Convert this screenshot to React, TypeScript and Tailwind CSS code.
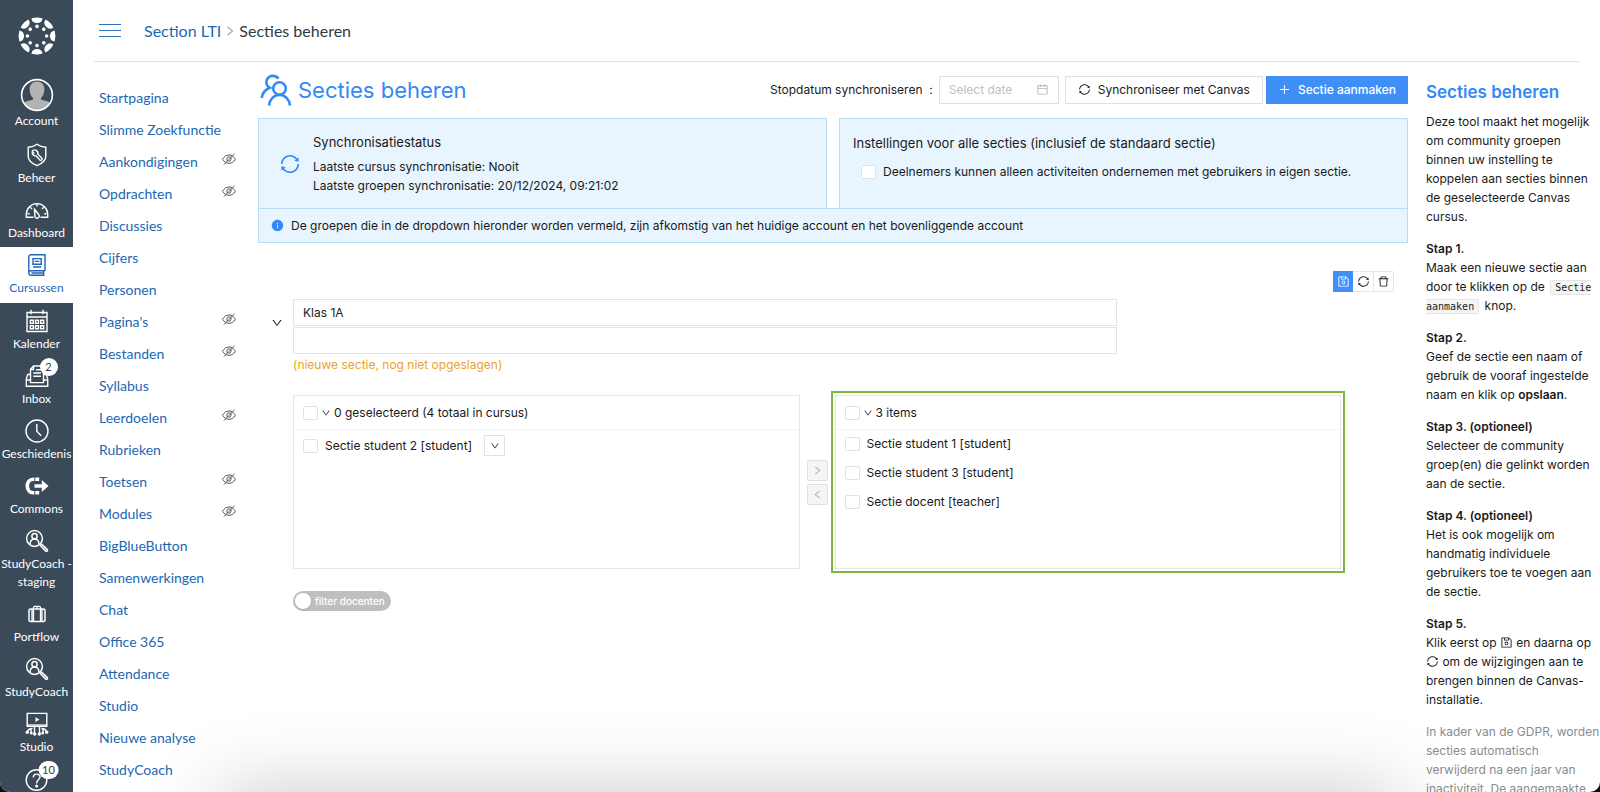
import type { ComponentType, ReactNode } from "react";
import {
  AiFillInfoCircle,
  AiOutlineCalendar,
  AiOutlineDelete,
  AiOutlineDown,
  AiOutlineLeft,
  AiOutlinePlus,
  AiOutlineRight,
  AiOutlineSave,
  AiOutlineSync,
} from "react-icons/ai";

type IconType = ComponentType<{ className?: string }>;

const spokes = [0, 45, 90, 135, 180, 225, 270, 315];

function CanvasLogo() {
  return (
    <svg viewBox="-20 -20 40 40" className="h-10 w-10" fill="#fff">
      {spokes.map((deg) => (
        <g key={deg} transform={`rotate(${deg})`}>
          <path d="M-5.6 -17.6 A18.5 18.5 0 0 1 5.6 -17.6 A5.7 5.7 0 0 1 -5.6 -17.6Z" />
          <circle cx="0" cy="-9.6" r="1.8" />
        </g>
      ))}
    </svg>
  );
}

function AvatarIcon() {
  return (
    <svg viewBox="0 0 34 34" className="h-[34px] w-[34px]">
      <defs>
        <clipPath id="avatar-clip">
          <circle cx="17" cy="17" r="15" />
        </clipPath>
      </defs>
      <g clipPath="url(#avatar-clip)" fill="#b3b3b3">
        <path d="M17 3.500c4.600 0 7.400 3.200 7.400 8 0 4-1.800 7.300-3.400 8.600v1.400c0 .8 9 1.200 11 5V34H2v-7.500c2-3.800 11-4.200 11-5v-1.400c-1.600-1.300-3.400-4.600-3.400-8.600 0-4.800 2.800-8 7.400-8z" />
      </g>
      <circle cx="17" cy="17" r="15.400" fill="none" stroke="#fff" strokeWidth="1.600" />
    </svg>
  );
}

function AdminIcon({ className }: { className?: string }) {
  return (
    <svg viewBox="0 0 24 24" className={className} fill="none" stroke="currentColor" strokeWidth="1.400">
      <path d="M12 1.300c2.600 2 5.400 2.800 8.800 2.900v9c0 4.200-4 7.400-8.800 9.500-4.800-2.100-8.800-5.300-8.800-9.500v-9C6.600 4.100 9.400 3.300 12 1.300z" />
      <path d="M7 8.200a3.300 3.300 0 0 1 5.800 2.800l4.100 4.300c.9 1.100-.9 2.800-2 1.800l-4-4.300A3.300 3.300 0 0 1 7.100 9.600" />
      <path d="M7 8.200l2.300 2.200" />
    </svg>
  );
}

function DashboardIcon({ className }: { className?: string }) {
  return (
    <svg viewBox="0 0 24 24" className={className} fill="none" stroke="currentColor" strokeWidth="1.400">
      <path d="M8.500 19.300H1.300v-3a10.700 10.700 0 0 1 21.400 0v3h-7.200" />
      <path d="M9.500 11.300l4.200 5.200a2.200 2.200 0 1 1-3.800 1.300z" />
      <path d="M12 6v2.600M5.200 9.200L7 11M18.800 9.200L17 11M2.500 15.700h2.200M21.500 15.700h-2.200" />
    </svg>
  );
}

function CoursesIcon({ className }: { className?: string }) {
  return (
    <svg viewBox="0 0 24 24" className={className} fill="none" stroke="currentColor" strokeWidth="1.400">
      <path d="M20 17.700V1.700H6a2.200 2.200 0 0 0-2.200 2.200v16.400A2 2 0 0 0 5.900 22.300H19.600M20 17.700H6a2.200 2.200 0 0 0-2.200 2.300M18.600 17.900v4.200M6.500 20h11.500" />
      <path d="M8 5.600h8.200v5.600H8zM9.800 8.400h4.600M8 14h8.200" />
    </svg>
  );
}

function CalendarIcon({ className }: { className?: string }) {
  return (
    <svg viewBox="0 0 24 24" className={className} fill="none" stroke="currentColor" strokeWidth="1.400">
      <path d="M2 3.500h20v19H2zM2 8h20M6 .8v4.500M18 .8v4.500" />
      <path d="M5.300 11.300h3v3h-3zM10.500 11.300h3v3h-3zM15.700 11.300h3v3h-3zM5.300 16.700h3v3h-3zM10.500 16.700h3v3h-3zM15.700 16.700h3v3h-3z" />
    </svg>
  );
}

function InboxIcon({ className }: { className?: string }) {
  return (
    <svg viewBox="0 0 24 24" className={className} fill="none" stroke="currentColor" strokeWidth="1.400">
      <path d="M5 10.500H2.600L1.300 15v7.300h21.400V15l-1.300-4.500H19M1.300 16h4.200v2.600h13V16h4.200" />
      <path d="M5.500 16V5.200L8.500 2h10v14M8.500 2v3.500H5.500M11 5.800h5M8.300 9h7.700M8.300 12.300h7.700" />
    </svg>
  );
}

function HistoryIcon({ className }: { className?: string }) {
  return (
    <svg viewBox="0 0 24 24" className={className} fill="none" stroke="currentColor" strokeWidth="1.400">
      <circle cx="12" cy="12" r="11" />
      <path d="M11.800 5v7.200l4.400 4.600" />
    </svg>
  );
}

function CommonsIcon({ className }: { className?: string }) {
  return (
    <svg viewBox="0 0 24 24" className={className} fill="none" stroke="currentColor" strokeWidth="3.600">
      <path d="M16.800 6v4.200H9.500v3.600h7.300V18l6.700-6z" fill="currentColor" stroke="none" />
      <path d="M9.300 5.200H8.500C4.500 5.200 2.300 8 2.300 12s2.200 6.800 6.200 6.800h.8M10.200 5.200h4M10.200 18.800h4" />
    </svg>
  );
}

function StudyCoachIcon({ className }: { className?: string }) {
  return (
    <svg viewBox="0 0 24 24" className={className} fill="none" stroke="currentColor" strokeWidth="1.500">
      <circle cx="9.500" cy="9.500" r="7.900" />
      <circle cx="9.500" cy="7.200" r="2.600" />
      <path d="M5 15.200c.2-3.400 2-5.200 4.500-5.200s4.300 1.800 4.500 5.200" />
      <path d="M15.400 16.600l1.400-1.400 5.500 5.400c.8 1-.5 2.300-1.500 1.500z" />
    </svg>
  );
}

function PortflowIcon({ className }: { className?: string }) {
  return (
    <svg viewBox="0 0 24 24" className={className} fill="none" stroke="currentColor" strokeWidth="1.500">
      <rect x="4" y="7" width="16" height="12.500" rx="1.500" />
      <path d="M8.500 19.500V5.600c0-.8.400-1.200 1.200-1.200h4.600c.8 0 1.200.4 1.200 1.200v13.900M12 4.400V7M7 7v12.500M17 7v12.500" strokeWidth="1.300" />
    </svg>
  );
}

function StudioIcon({ className }: { className?: string }) {
  return (
    <svg viewBox="0 0 24 24" className={className} fill="none" stroke="currentColor" strokeWidth="1.400">
      <path d="M2.200 1.400h19.600v13H2.200z" />
      <path d="M2.200 13.300h19.600" strokeWidth="2.400" opacity=".7" />
      <path d="M10.500 5.300l4 2.300-4 2.300z" fill="currentColor" stroke="none" />
      <path d="M9.500 15v6M14.500 15v6M7.500 16.500c-3 0-4.500 1-5 3.500M16.500 16.500c3 0 4.500 1 5 3.500M6 17v3M18 17v3" />
      <g fill="currentColor" stroke="none">
        <circle cx="2.300" cy="20.300" r="1.700" />
        <circle cx="6.300" cy="21" r="1.500" />
        <circle cx="9.700" cy="22" r="1.700" />
        <circle cx="14.300" cy="22" r="1.700" />
        <circle cx="17.700" cy="21" r="1.500" />
        <circle cx="21.700" cy="20.300" r="1.700" />
      </g>
    </svg>
  );
}

function HelpIcon({ className }: { className?: string }) {
  return (
    <svg viewBox="0 0 24 24" className={className} fill="none" stroke="currentColor" strokeWidth="1.400">
      <circle cx="11.500" cy="13" r="10.300" />
      <path d="M8.300 10.500c0-4.500 6.700-4.300 6.700-.5 0 2.600-3.400 2.800-3.400 6.500" />
      <circle cx="11.600" cy="19" r=".8" fill="currentColor" />
    </svg>
  );
}

function HiddenIcon() {
  return (
    <svg viewBox="0 0 14 14" className="mb-1 h-[14px] w-[14px] text-[#3f4b56]" fill="none" stroke="currentColor" strokeWidth=".9">
      <path d="M.6 7.300C2 4.600 4.200 3 7 3s5 1.600 6.400 4.300C12 9.900 9.800 11.300 7 11.300S2 9.900.6 7.300z" />
      <circle cx="7" cy="7" r="2.200" />
      <path d="M2 12.500L12.800 1.500" />
    </svg>
  );
}

function SectionsIcon() {
  return (
    <svg viewBox="0 0 32 32" className="h-8 w-8" fill="none" stroke="currentColor" strokeWidth="2.600">
      <circle cx="19.500" cy="14.500" r="6.300" />
      <path d="M9 31.500c.7-6.400 4.900-10.500 10.500-10.500S29.300 25.100 30 31.500" />
      <path d="M18.500 4.600C17 2.800 15 1.900 12.800 1.900c-3.700 0-6.500 2.700-6.500 6.200 0 2.600 1.300 4.600 3.600 5.700-4.500 1.600-7.400 5.200-8.200 10.200" />
    </svg>
  );
}

const navItems: { label: string; icon: IconType; active?: boolean; badge?: string }[] = [
  { label: "Beheer", icon: AdminIcon },
  { label: "Dashboard", icon: DashboardIcon },
  { label: "Cursussen", icon: CoursesIcon, active: true },
  { label: "Kalender", icon: CalendarIcon },
  { label: "Inbox", icon: InboxIcon, badge: "2" },
  { label: "Geschiedenis", icon: HistoryIcon },
  { label: "Commons", icon: CommonsIcon },
  { label: "StudyCoach\u00a0- staging", icon: StudyCoachIcon },
  { label: "Portflow", icon: PortflowIcon },
  { label: "StudyCoach", icon: StudyCoachIcon },
  { label: "Studio", icon: StudioIcon },
];

const courseLinks: { label: string; hidden?: boolean }[] = [
  { label: "Startpagina" },
  { label: "Slimme Zoekfunctie" },
  { label: "Aankondigingen", hidden: true },
  { label: "Opdrachten", hidden: true },
  { label: "Discussies" },
  { label: "Cijfers" },
  { label: "Personen" },
  { label: "Pagina's", hidden: true },
  { label: "Bestanden", hidden: true },
  { label: "Syllabus" },
  { label: "Leerdoelen", hidden: true },
  { label: "Rubrieken" },
  { label: "Toetsen", hidden: true },
  { label: "Modules", hidden: true },
  { label: "BigBlueButton" },
  { label: "Samenwerkingen" },
  { label: "Chat" },
  { label: "Office 365" },
  { label: "Attendance" },
  { label: "Studio" },
  { label: "Nieuwe analyse" },
  { label: "StudyCoach" },
];

function NavBadge({ children }: { children: ReactNode }) {
  return (
    <span className="absolute -top-1.5 left-6 min-w-[18px] -translate-x-1/2 rounded-full bg-white px-1 text-center text-[11px] text-[#2d3b45]">
      {children}
    </span>
  );
}

function GlobalNav() {
  return (
    <nav className="flex w-[73px] shrink-0 flex-col overflow-hidden bg-[#3b4a58] font-['Lato',sans-serif] text-[12px] leading-[18px] text-white">
      <a href="#" aria-label="Canvas" className="flex h-[78px] shrink-0 justify-center pt-4">
        <CanvasLogo />
      </a>
      <a href="#" className="flex h-[59px] shrink-0 flex-col items-center">
        <AvatarIcon />
        <span>Account</span>
      </a>
      {navItems.map(({ label, icon: Icon, active, badge }) => (
        <a
          key={label}
          href="#"
          className={`flex shrink-0 flex-col items-center gap-0.5 pt-1.5 text-center ${
            active ? "bg-white pb-1.5 text-[#1c68b3]" : "pb-[5px]"
          }`}
        >
          <span className="relative">
            <Icon className="h-6 w-6" />
            {badge && <NavBadge>{badge}</NavBadge>}
          </span>
          <span>{label}</span>
        </a>
      ))}
      <a href="#" aria-label="Help" className="flex shrink-0 justify-center pt-1.5">
        <span className="relative">
          <HelpIcon className="h-6 w-6" />
          <NavBadge>10</NavBadge>
        </span>
      </a>
    </nav>
  );
}

function CourseMenu() {
  return (
    <ul className="w-[164px] shrink-0 pt-[19px] pl-[5px] font-['Lato',sans-serif] text-[14px]">
      {courseLinks.map(({ label, hidden }) => (
        <li key={label} className="flex h-8 items-center justify-between pr-[22px] text-[#1c68b3]">
          <a href="#" className="whitespace-nowrap">
            {label}
          </a>
          {hidden && <HiddenIcon />}
        </li>
      ))}
    </ul>
  );
}

function Checkbox({ label, children }: { label?: string; children?: ReactNode }) {
  return (
    <label className="flex items-center gap-[7px]">
      <input
        type="checkbox"
        aria-label={label}
        className="h-[14px] w-[15px] appearance-none rounded-xs border border-[#e2e2e2] bg-white checked:bg-[#408ff7]"
      />
      {children}
    </label>
  );
}

function PanelHeader({ label, children }: { label: string; children: ReactNode }) {
  return (
    <div className="flex h-[34px] items-center gap-[3px] border-b border-[#f3f3f3] pl-[9px]">
      <Checkbox label={label} />
      <AiOutlineDown className="h-2.5 w-2.5" />
      <span>{children}</span>
    </div>
  );
}

function Toolbar() {
  return (
    <div className="mt-7 flex justify-end pr-[14px]">
      <button type="button" aria-label="Opslaan" className="flex h-[21px] w-5 items-center justify-center bg-[#408ff7] text-white">
        <AiOutlineSave className="h-[13px] w-[13px]" />
      </button>
      <button type="button" aria-label="Synchroniseren" className="flex h-[21px] w-5 items-center justify-center border-y border-[#e5e5e5]">
        <AiOutlineSync className="h-[13px] w-[13px]" />
      </button>
      <button type="button" aria-label="Verwijderen" className="flex h-[21px] w-[21px] items-center justify-center rounded-r-xs border border-[#e5e5e5]">
        <AiOutlineDelete className="h-[13px] w-[13px]" />
      </button>
    </div>
  );
}

function SectionEditor() {
  return (
    <section className="pr-[67px] pl-[13px]">
      <div className="mt-[7px] flex gap-2.5">
        <button type="button" aria-label="Inklappen" className="mb-[27px] self-center">
          <AiOutlineDown className="h-3 w-3" />
        </button>
        <div className="mr-[224px] flex-1">
          <input
            aria-label="Naam van de sectie"
            defaultValue="Klas 1A"
            className="block h-[27px] w-full border border-[#e4e4e4] px-[9px]"
          />
          <input aria-label="SIS-ID" className="mt-px block h-[27px] w-full border border-[#e4e4e4] px-[9px]" />
          <p className="mt-px text-[#eba226]">(nieuwe sectie, nog niet opgeslagen)</p>
        </div>
      </div>

      <div className="mt-[21px] ml-[22px] flex">
        <div className="h-[174px] flex-1 border border-[#e6e6e6]">
          <PanelHeader label="Alles selecteren">0 geselecteerd (4 totaal in cursus)</PanelHeader>
          <div className="flex items-center gap-3 pt-[5px] pl-[9px]">
            <Checkbox>Sectie student 2 [student]</Checkbox>
            <button type="button" aria-label="Meer" className="flex h-[21px] w-[21px] items-center justify-center border border-[#e2e2e2]">
              <AiOutlineDown className="h-2.5 w-2.5" />
            </button>
          </div>
        </div>
        <div className="flex w-[35px] flex-col items-center justify-center gap-[3px] text-[#a5a5a5]">
          <button type="button" disabled aria-label="Naar rechts" className="flex h-[21px] w-[21px] items-center justify-center rounded-xs border border-[#e0e0e0] bg-[#f5f5f5]">
            <AiOutlineRight className="h-[11px] w-[11px]" />
          </button>
          <button type="button" disabled aria-label="Naar links" className="flex h-[21px] w-[21px] items-center justify-center rounded-xs border border-[#e0e0e0] bg-[#f5f5f5]">
            <AiOutlineLeft className="h-[11px] w-[11px]" />
          </button>
        </div>
        <div className="relative h-[174px] flex-1 border border-[#e6e6e6]">
          <div className="pointer-events-none absolute -inset-[5px] border-2 border-[#7cb743]" />
          <PanelHeader label="Alles selecteren">3 items</PanelHeader>
          <ul className="flex flex-col gap-2.5 pt-1 pl-[9px]">
            <li><Checkbox>Sectie student 1 [student]</Checkbox></li>
            <li><Checkbox>Sectie student 3 [student]</Checkbox></li>
            <li><Checkbox>Sectie docent [teacher]</Checkbox></li>
          </ul>
        </div>
      </div>

      <button
        type="button"
        role="switch"
        aria-checked="false"
        className="mt-[22px] ml-[22px] flex h-5 items-center gap-1 rounded-full bg-[#bfbfbf] pr-1.5 pl-0.5 text-[10px] font-medium text-white"
      >
        <span className="h-4 w-4 rounded-full bg-white shadow" />
        filter docenten
      </button>
    </section>
  );
}

function HelpPanel() {
  return (
    <aside className="flex w-[192px] shrink-0 flex-col gap-[13px] pt-[19px] pl-[18px] font-['Inter',sans-serif] text-[12px] leading-[19px] text-[#1a1a1a]">
      <h2 className="-mb-1 text-[17px] leading-[22px] font-semibold text-[#3389f7]">Secties beheren</h2>
      <p>Deze tool maakt het mogelijk om community groepen binnen uw instelling te koppelen aan secties binnen de geselecteerde Canvas cursus.</p>
      <p>
        <b className="font-semibold">Stap 1.</b>
        <br />
        Maak een nieuwe sectie aan door te klikken op de{" "}
        <code className="mx-0.5 rounded-xs border border-[#e4e4e4] bg-[#f5f5f5] px-1 py-px font-['DejaVu_Sans_Mono',monospace] text-[10px] leading-none">
          Sectie aanmaken
        </code>{" "}
        knop.
      </p>
      <p>
        <b className="font-semibold">Stap 2.</b>
        <br />
        Geef de sectie een naam of gebruik de vooraf ingestelde naam en klik op <b className="font-semibold">opslaan</b>.
      </p>
      <p>
        <b className="font-semibold">Stap 3. (optioneel)</b>
        <br />
        Selecteer de community groep(en) die gelinkt worden aan de sectie.
      </p>
      <p>
        <b className="font-semibold">Stap 4. (optioneel)</b>
        <br />
        Het is ook mogelijk om handmatig individuele gebruikers toe te voegen aan de sectie.
      </p>
      <p>
        <b className="font-semibold">Stap 5.</b>
        <br />
        Klik eerst op <AiOutlineSave className="inline h-[13px] w-[13px] align-[-2px]" /> en daarna op{" "}
        <AiOutlineSync className="inline h-[13px] w-[13px] align-[-2px]" /> om de wijzigingen aan te brengen binnen de Canvas-installatie.
      </p>
      <p className="text-[#8c8c8c]">
        In kader van de GDPR, worden secties automatisch verwijderd na een jaar van inactiviteit. De aangemaakte
      </p>
    </aside>
  );
}

export default function App() {
  return (
    <div className="h-screen bg-[#0b0f0a]">
      <div className="relative flex h-full overflow-hidden rounded-b-[10px] bg-white">
        <GlobalNav />
        <div className="flex min-w-0 flex-1 flex-col pl-[21px]">
          <header className="mr-[21px] flex h-[62px] shrink-0 items-center border-b border-[#dfe1e3] pl-[5px] font-['Lato',sans-serif] text-[16px]">
            <button type="button" aria-label="Menu" className="flex w-[22px] flex-col gap-[5px]">
              <span className="h-px bg-[#2f74b8]" />
              <span className="h-px bg-[#2f74b8]" />
              <span className="h-px bg-[#2f74b8]" />
            </button>
            <a href="#" className="ml-[23px] text-[#1c68b3]">Section LTI</a>
            <AiOutlineRight className="mx-[3px] h-3 w-3 text-[#8a939b]" />
            <span className="text-[#2d3b45]">Secties beheren</span>
          </header>

          <div className="flex min-h-0 flex-1">
            <CourseMenu />
            <main className="min-w-0 flex-1 pt-[11px] font-['Inter',sans-serif] text-[12px] leading-[19px] text-[#1a1a1a]">
              <div className="flex items-center">
                <div className="flex items-center gap-1.5 pl-0.5 text-[#3389f7]">
                  <SectionsIcon />
                  <h1 className="pt-px text-[22px] leading-8">Secties beheren</h1>
                </div>
                <label htmlFor="stop-date" className="ml-auto whitespace-pre">Stopdatum synchroniseren  :</label>
                <div className="ml-1.5 flex h-7 w-[120px] items-center border border-[#e0e0e0] px-[9px]">
                  <input id="stop-date" placeholder="Select date" className="min-w-0 flex-1 placeholder:text-[#bfbfbf]" />
                  <AiOutlineCalendar className="h-[13px] w-[13px] text-[#b5b5b5]" />
                </div>
                <button type="button" className="ml-1.5 flex h-7 items-center gap-[7px] border border-[#e0e0e0] px-3">
                  <AiOutlineSync className="h-[13px] w-[13px]" />
                  Synchroniseer met Canvas
                </button>
                <button type="button" className="ml-[3px] flex h-7 items-center gap-[7px] bg-[#408ff7] px-3 font-medium text-white">
                  <AiOutlinePlus className="h-[13px] w-[13px]" />
                  Sectie aanmaken
                </button>
              </div>

              <div className="mt-3 grid grid-cols-2 gap-3">
                <div className="flex h-[91px] items-center gap-3 border border-[#b9dcf7] bg-[#e8f5fe] pl-5">
                  <AiOutlineSync className="h-[22px] w-[22px] text-[#3389f7]" />
                  <div>
                    <h3 className="mb-[5px] text-[13px]">Synchronisatiestatus</h3>
                    <p>Laatste cursus synchronisatie: Nooit</p>
                    <p>Laatste groepen synchronisatie: 20/12/2024, 09:21:02</p>
                  </div>
                </div>
                <div className="h-[91px] border border-[#b9dcf7] bg-[#e8f5fe] px-[13px] pt-[15px]">
                  <h3 className="mb-[9px] text-[13px]">Instellingen voor alle secties (inclusief de standaard sectie)</h3>
                  <div className="pl-2">
                    <Checkbox>Deelnemers kunnen alleen activiteiten ondernemen met gebruikers in eigen sectie.</Checkbox>
                  </div>
                </div>
              </div>
              <div className="-mt-px flex h-[35px] items-center gap-[7px] border border-[#b9dcf7] bg-[#e8f5fe] pl-3">
                <AiFillInfoCircle className="h-[13px] w-[13px] text-[#3389f7]" />
                De groepen die in de dropdown hieronder worden vermeld, zijn afkomstig van het huidige account en het bovenliggende account
              </div>

              <Toolbar />
              <SectionEditor />
            </main>
            <HelpPanel />
          </div>
        </div>
        {/* soft shade along the bottom edge */}
        <div className="pointer-events-none absolute top-full right-[200px] left-[220px] h-20 shadow-[0_0_80px_rgba(0,0,0,0.22)]" />
      </div>
    </div>
  );
}
